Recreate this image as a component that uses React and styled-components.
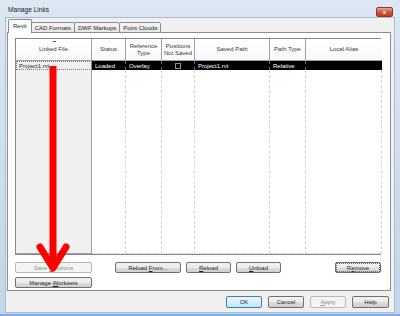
import React from "react";
import styled, { createGlobalStyle } from "styled-components";

const Global = createGlobalStyle`
  html, body { margin: 0; padding: 0; background: #fff; overflow: hidden; }
  * { box-sizing: border-box; }
`;

const Window = styled.div`
  position: relative;
  width: 400px;
  height: 316px;
  display: flex;
  flex-direction: column;
  padding: 0 5px 5px 5px;
  background: linear-gradient(#dce7f3, #cddcec 60%, #c3d5e8);
  border-bottom: 2px solid #7fb2e0;
  font-family: "Liberation Sans", Arial, sans-serif;
  font-size: 6px;
  color: #1e1e1e;
`;

const TitleBar = styled.div`
  height: 17px;
  display: flex;
  align-items: flex-start;
  padding: 6px 2px 0 3px;
`;

const Title = styled.div`
  font-size: 6.6px;
  color: #1a1a1a;
  line-height: 7px;
`;

const CloseBtn = styled.div`
  margin-left: auto;
  margin-top: 1px;
  width: 17px;
  height: 10px;
  border: 1px solid #8a3a2c;
  border-radius: 2px;
  background: linear-gradient(#e9a593, #d3553d 50%, #c33a22);
  display: flex;
  align-items: center;
  justify-content: center;
  color: #fff;
  font-size: 6px;
  font-weight: bold;
  line-height: 6px;
`;

const Client = styled.div`
  flex: 1;
  background: #f0f0f0;
  border: 1px solid #a8bcd4;
  display: flex;
  flex-direction: column;
  padding: 1px 3px 4px 1px;
`;

const TabStrip = styled.div`
  display: flex;
  align-items: flex-end;
  height: 14px;
  padding-left: 1px;
  position: relative;
  z-index: 1;
  margin-bottom: -1px;
`;

const Tab = styled.div`
  height: ${(p) => (p.$active ? 14 : 11)}px;
  padding: 0 ${(p) => (p.$active ? 4 : 3)}px;
  margin-left: ${(p) => (p.$active ? 0 : -1)}px;
  display: flex;
  align-items: center;
  border: 1px solid #898c95;
  border-bottom: ${(p) => (p.$active ? "none" : "1px solid #898c95")};
  border-radius: 2px 2px 0 0;
  background: ${(p) =>
    p.$active ? "#fff" : "linear-gradient(#f7f7f7, #e6e6e6)"};
  color: #1e1e1e;
  white-space: nowrap;
  line-height: 6px;
  padding-bottom: ${(p) => (p.$active ? 2 : 0)}px;
`;

const TabPanel = styled.div`
  height: 259px;
  border: 1px solid #898c95;
  background: #fff;
  display: flex;
  flex-direction: column;
  padding: 5px 9px 2px 7px;
`;

const Grid = styled.div`
  height: 217px;
  display: grid;
  grid-template-columns: 76px 34px 36px 33px 75px 36px 76px;
  grid-template-rows: 22px 9px 1fr;
  border: 1px solid #828790;
`;

const HeadCell = styled.div`
  background: linear-gradient(#ffffff, #f7f8fa);
  border-right: ${(p) => (p.$last ? "none" : "1px solid #a0a0a0")};
  border-bottom: 1px solid #a0a0a0;
  display: flex;
  flex-direction: column;
  align-items: center;
  justify-content: center;
  text-align: center;
  color: #3a3a3a;
  line-height: 7px;
  font-size: 6px;
  position: relative;
`;

const SortMark = styled.div`
  position: absolute;
  top: 2px;
  left: 50%;
  width: 3px;
  height: 1px;
  margin-left: -1px;
  background: #555;
`;

const RowCell = styled.div`
  background: ${(p) => (p.$first ? "#f0f0f0" : "#000")};
  color: ${(p) => (p.$first ? "#1e1e1e" : "#fff")};
  border-right: ${(p) =>
    p.$first ? "1px solid #a0a0a0" : p.$last ? "none" : "1px dashed #6a6a6a"};
  outline: ${(p) => (p.$first ? "1px dotted #777" : "none")};
  outline-offset: -1px;
  display: flex;
  align-items: center;
  justify-content: ${(p) => (p.$center ? "center" : "flex-start")};
  padding-left: ${(p) => (p.$center ? 0 : 3)}px;
  line-height: 6px;
  font-size: 6px;
  white-space: nowrap;
  overflow: hidden;
`;

const Check = styled.div`
  width: 6px;
  height: 6px;
  border: 1px solid #8f8f8f;
  background: #000;
`;

const BodyCell = styled.div`
  background: ${(p) => (p.$first ? "#f0f0f0" : "#fff")};
  border-right: ${(p) =>
    p.$first ? "1px solid #a0a0a0" : "1px dashed #d2d2d2"};
  border-bottom: ${(p) =>
    p.$first ? "1px solid #a0a0a0" : "1px dotted #cfcfcf"};
`;

const ButtonRow = styled.div`
  display: flex;
  align-items: center;
  margin-top: ${(p) => p.$mt || 0}px;
  gap: 5px;
`;

const Button = styled.div`
  width: ${(p) => p.$w}px;
  height: ${(p) => p.$h || 11}px;
  margin-left: ${(p) => (p.$auto ? "auto" : `${p.$ml || 0}px`)};
  border: 1px solid
    ${(p) => (p.$disabled ? "#b5b9bc" : p.$default ? "#3c7fb1" : "#707070")};
  border-radius: 2px;
  background: ${(p) =>
    p.$disabled
      ? "#f4f4f4"
      : p.$default
      ? "linear-gradient(#eaf6fd, #d9f0fc 50%, #bee6fd)"
      : "linear-gradient(#f2f2f2, #ebebeb 50%, #dddddd 51%, #cfcfcf)"};
  color: ${(p) => (p.$disabled ? "#8a8a8a" : "#1e1e1e")};
  display: flex;
  align-items: center;
  justify-content: center;
  font-size: 6px;
  line-height: 6px;
  white-space: nowrap;
  position: relative;
  outline: ${(p) => (p.$focus ? "1px dotted #666" : "none")};
  outline-offset: -2px;
`;

const Footer = styled.div`
  display: flex;
  justify-content: flex-end;
  gap: 6px;
  margin-top: 5px;
  padding-right: 2px;
`;

const U = styled.span`
  text-decoration: underline;
  text-underline-offset: 1px;
`;

const ArrowSvg = styled.svg`
  position: absolute;
  left: 0;
  top: 0;
  pointer-events: none;
`;

const cols = [
  { key: "Linked File" },
  { key: "Status" },
  { key: "Reference\nType" },
  { key: "Positions\nNot Saved" },
  { key: "Saved Path" },
  { key: "Path Type" },
  { key: "Local Alias" },
];

export default function App() {
  return (
    <>
      <Global />
      <Window>
        <TitleBar>
          <Title>Manage Links</Title>
          <CloseBtn>x</CloseBtn>
        </TitleBar>
        <Client>
          <TabStrip>
            <Tab $active>Revit</Tab>
            <Tab>CAD Formats</Tab>
            <Tab>DWF Markups</Tab>
            <Tab>Point Clouds</Tab>
          </TabStrip>
          <TabPanel>
            <Grid>
              {cols.map((c, i) => (
                <HeadCell key={c.key} $last={i === cols.length - 1}>
                  {i === 0 && <SortMark />}
                  {c.key.split("\n").map((l) => (
                    <span key={l}>{l}</span>
                  ))}
                </HeadCell>
              ))}
              <RowCell $first>Project1.rvt</RowCell>
              <RowCell>Loaded</RowCell>
              <RowCell>Overlay</RowCell>
              <RowCell $center>
                <Check />
              </RowCell>
              <RowCell>Project1.rvt</RowCell>
              <RowCell>Relative</RowCell>
              <RowCell $last></RowCell>
              {cols.map((c, i) => (
                <BodyCell key={"b" + c.key} $first={i === 0} />
              ))}
            </Grid>
            <ButtonRow $mt={7}>
              <Button $w={77} $disabled>
                Save&nbsp;<U>P</U>ositions
              </Button>
              <Button $w={66} $ml={18}>
                Reload&nbsp;<U>F</U>rom...
              </Button>
              <Button $w={45}>
                <U>R</U>eload
              </Button>
              <Button $w={45}>
                <U>U</U>nload
              </Button>
              <Button $w={46} $auto $focus>
                R<U>e</U>move
              </Button>
            </ButtonRow>
            <ButtonRow $mt={4}>
              <Button $w={77}>
                Manage&nbsp;<U>W</U>orksets
              </Button>
            </ButtonRow>
          </TabPanel>
          <Footer>
            <Button $w={36} $h={12} $default>
              OK
            </Button>
            <Button $w={36} $h={12}>
              Cancel
            </Button>
            <Button $w={36} $h={12} $disabled>
              <U>A</U>pply
            </Button>
            <Button $w={37} $h={12}>
              Help
            </Button>
          </Footer>
        </Client>
        <ArrowSvg width="400" height="316" viewBox="0 0 400 316">
          <rect x="49.5" y="66" width="7" height="196" fill="#ff0000" />
          <polyline
            points="40,247 53,268 66,247"
            fill="none"
            stroke="#ff0000"
            strokeWidth="7"
            strokeLinecap="round"
            strokeLinejoin="round"
          />
        </ArrowSvg>
      </Window>
    </>
  );
}
